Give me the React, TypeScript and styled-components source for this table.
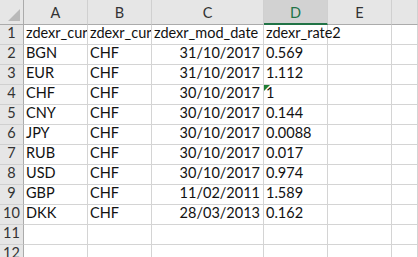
import React from "react";
import styled, { createGlobalStyle, css } from "styled-components";

const Global = createGlobalStyle`
  html, body { margin: 0; padding: 0; background: #fff; overflow: hidden; }
  body { width: 418px; height: 257px; }
`;

const Sheet = styled.div`
  display: grid;
  grid-template-columns: 24px 64px 64px 112px 64px 64px 1fr;
  grid-template-rows: 25px;
  grid-auto-rows: 20px;
  width: 418px;
  height: 257px;
  overflow: hidden;
  font-family: Lato, "Liberation Sans", sans-serif;
  font-size: 14.5px;
`;

const Corner = styled.div`
  position: relative;
  background: #e6e6e6;
  border-right: 1px solid #ababab;
  border-bottom: 1px solid #ababab;
  box-sizing: border-box;
  &::after {
    content: "";
    position: absolute;
    right: 3px;
    bottom: 3px;
    width: 0;
    height: 0;
    border-left: 12px solid transparent;
    border-bottom: 12px solid #b9b9b9;
  }
`;

const ColHeader = styled.div<{ $selected?: boolean }>`
  box-sizing: border-box;
  background: #e6e6e6;
  border-right: 1px solid #d0d0d0;
  border-bottom: 1px solid #ababab;
  color: #333;
  display: flex;
  align-items: flex-end;
  justify-content: center;
  padding-bottom: 4px;
  line-height: 14px;
  ${(p) =>
    p.$selected &&
    css`
      background: #d2d2d2;
      color: #217346;
      border-bottom: 2px solid #217346;
      padding-bottom: 3px;
    `}
`;

const RowHeader = styled.div`
  box-sizing: border-box;
  background: #e6e6e6;
  border-right: 1px solid #ababab;
  border-bottom: 1px solid #d0d0d0;
  color: #333;
  display: flex;
  align-items: flex-end;
  justify-content: center;
  padding-bottom: 4px;
  line-height: 14px;
  overflow: hidden;
`;

const Cell = styled.div<{ $align?: "left" | "right"; $flag?: boolean; $spill?: boolean }>`
  position: relative;
  box-sizing: border-box;
  border-right: 1px solid #d4d4d4;
  border-bottom: 1px solid #d4d4d4;
  color: #111;
  display: flex;
  align-items: flex-end;
  justify-content: ${(p) => (p.$align === "right" ? "flex-end" : "flex-start")};
  padding: 0 3px 4px 2px;
  line-height: 14px;
  white-space: nowrap;
  overflow: ${(p) => (p.$spill ? "visible" : "hidden")};
  ${(p) =>
    p.$flag &&
    css`
      &::before {
        content: "";
        position: absolute;
        left: 0;
        top: 0;
        width: 0;
        height: 0;
        border-top: 6px solid #1e7e34;
        border-right: 6px solid transparent;
      }
    `}
`;

type Row = [string, string, string, string];

const header: Row = ["zdexr_cur", "zdexr_cur", "zdexr_mod_date", "zdexr_rate2"];
const data: Row[] = [
  ["BGN", "CHF", "31/10/2017", "0.569"],
  ["EUR", "CHF", "31/10/2017", "1.112"],
  ["CHF", "CHF", "30/10/2017", "1"],
  ["CNY", "CHF", "30/10/2017", "0.144"],
  ["JPY", "CHF", "30/10/2017", "0.0088"],
  ["RUB", "CHF", "30/10/2017", "0.017"],
  ["USD", "CHF", "30/10/2017", "0.974"],
  ["GBP", "CHF", "11/02/2011", "1.589"],
  ["DKK", "CHF", "28/03/2013", "0.162"],
];

const cols = ["A", "B", "C", "D", "E", ""];

export default function App() {
  const rows: (Row | null)[] = [header, ...data, null, null];
  return (
    <>
      <Global />
      <Sheet>
        <Corner />
        {cols.map((c, i) => (
          <ColHeader key={i} $selected={c === "D"}>
            {c}
          </ColHeader>
        ))}
        {rows.map((r, ri) => (
          <React.Fragment key={ri}>
            <RowHeader>{ri + 1}</RowHeader>
            <Cell>{r ? r[0] : ""}</Cell>
            <Cell>{r ? r[1] : ""}</Cell>
            <Cell $align={ri === 0 ? "left" : "right"}>{r ? r[2] : ""}</Cell>
            <Cell $flag={r?.[3] === "1"} $spill>
              {r ? r[3] : ""}
            </Cell>
            <Cell />
            <Cell />
          </React.Fragment>
        ))}
      </Sheet>
    </>
  );
}
